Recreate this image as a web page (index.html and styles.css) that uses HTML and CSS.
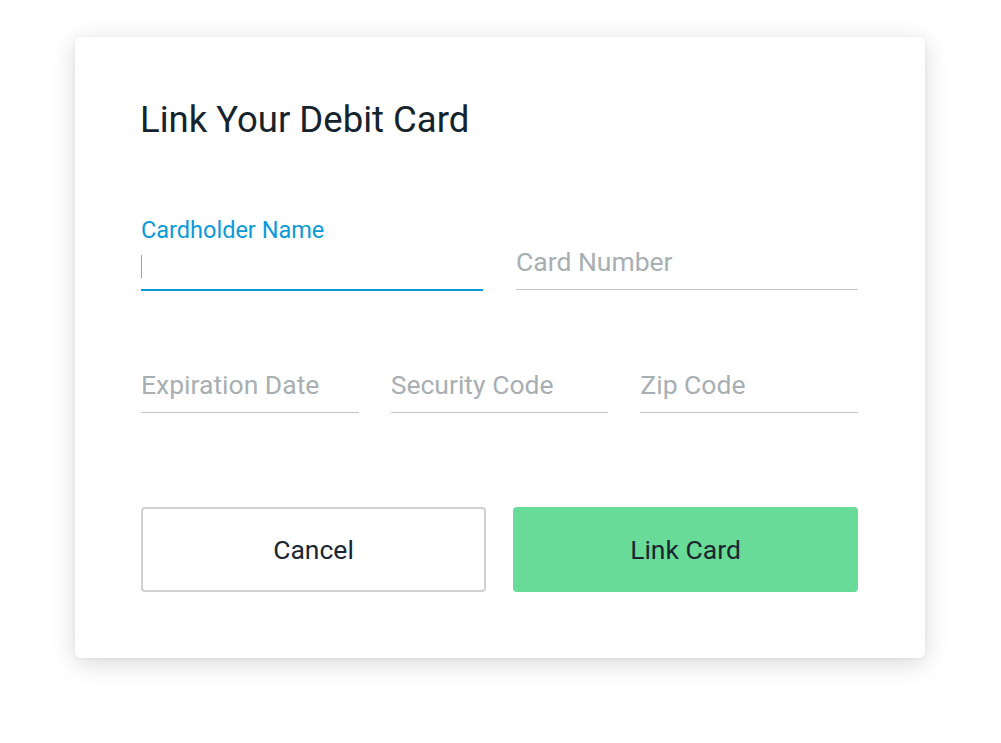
FILE: index.html
```html
<!DOCTYPE html>
<html lang="en">
<head>
<meta charset="utf-8">
<title>Link Your Debit Card</title>
<link rel="stylesheet" href="styles.css">
</head>
<body>
  <div class="card">
    <h1 class="title">Link Your Debit Card</h1>
    <div class="row row-2">
      <div class="field is-focused">
        <label class="label" for="name">Cardholder Name</label>
        <div class="control">
          <span class="caret"></span>
          <input id="name" class="input" type="text">
        </div>
      </div>
      <div class="field">
        <span class="label"></span>
        <div class="control">
          <input class="input" type="text" placeholder="Card Number">
        </div>
      </div>
    </div>
    <div class="row row-3">
      <div class="field">
        <span class="label"></span>
        <div class="control">
          <input class="input" type="text" placeholder="Expiration Date">
        </div>
      </div>
      <div class="field">
        <span class="label"></span>
        <div class="control">
          <input class="input" type="text" placeholder="Security Code">
        </div>
      </div>
      <div class="field">
        <span class="label"></span>
        <div class="control">
          <input class="input" type="text" placeholder="Zip Code">
        </div>
      </div>
    </div>
    <div class="actions">
      <button class="btn btn-cancel" type="button">Cancel</button>
      <button class="btn btn-primary" type="button">Link Card</button>
    </div>
  </div>
</body>
</html>
```

FILE: styles.css
```css
* { box-sizing: border-box; }

html, body {
  margin: 0;
  padding: 0;
  background: #ffffff;
  font-family: Roboto, "Liberation Sans", Arial, sans-serif;
}

body {
  padding: 37px 0 0 75px;
  min-height: 743px;
}

.card {
  width: 850px;
  height: 621px;
  background: #ffffff;
  border-radius: 6px;
  box-shadow: 0 5px 26px rgba(0, 0, 0, 0.15), 0 1px 4px rgba(0, 0, 0, 0.05);
  padding: 61px 67px 0 66px;
  display: flex;
  flex-direction: column;
}

.title {
  margin: 0 0 0 -1px;
  font-size: 36.5px;
  line-height: 44px;
  font-weight: 400;
  color: #15232d;
}

.row {
  display: grid;
}

.row-2 {
  grid-template-columns: minmax(0, 1fr) minmax(0, 1fr);
  column-gap: 33px;
  margin-top: 74px;
}

.row-3 {
  grid-template-columns: minmax(0, 1fr) minmax(0, 1fr) minmax(0, 1fr);
  column-gap: 32px;
  margin-top: 49px;
}

.field {
  display: flex;
  flex-direction: column;
  min-width: 0;
}

.label {
  display: block;
  height: 28px;
  font-size: 23.5px;
  line-height: 28px;
  color: #0a9ad8;
  margin-bottom: 1px;
  white-space: nowrap;
}

.control {
  display: flex;
  align-items: flex-start;
  height: 45px;
  padding-top: 0;
  border-bottom: 1px solid #c2c6c9;
}

.is-focused .control {
  height: 46px;
  border-bottom: 2px solid #0a9ad8;
  margin-bottom: -1px;
}

.caret {
  width: 1px;
  height: 23px;
  margin-top: 10px;
  background: #5ab8e6;
  flex: none;
}

.input {
  flex: 1;
  width: 100%;
  min-width: 0;
  border: none;
  outline: none;
  padding: 0;
  margin: 0;
  background: transparent;
  font-family: inherit;
  font-size: 26.5px;
  line-height: 34px;
  height: 34px;
  color: #15232d;
}

.input::placeholder {
  color: #a8afb3;
  opacity: 1;
}

.actions {
  display: grid;
  grid-template-columns: minmax(0, 1fr) minmax(0, 1fr);
  column-gap: 27px;
  margin-top: 94px;
}

.btn {
  height: 85px;
  border-radius: 4px;
  font-family: inherit;
  font-size: 26.5px;
  font-weight: 400;
  color: #1b2630;
  cursor: pointer;
}

.btn-cancel {
  background: #ffffff;
  border: 2px solid #cfd1d2;
}

.btn-primary {
  background: #69db98;
  border: none;
}
```
